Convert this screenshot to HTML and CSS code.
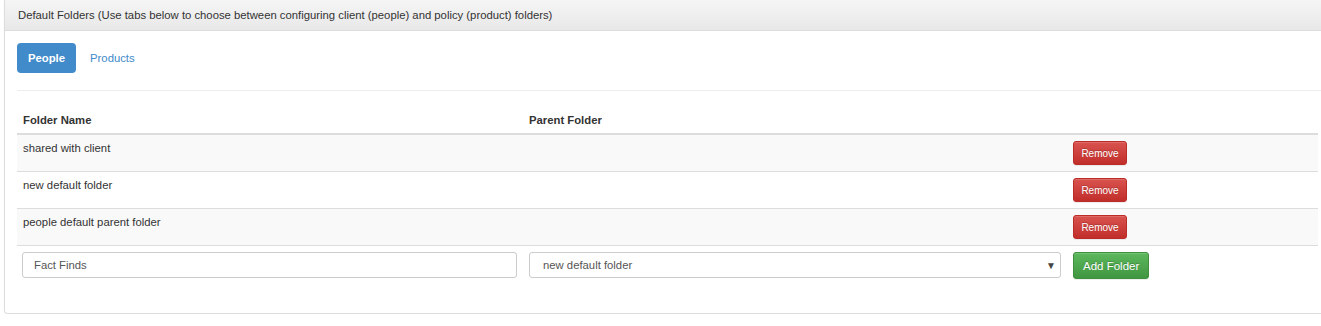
FILE: index.html
```html
<!DOCTYPE html>
<html lang="en">
<head>
  <meta charset="UTF-8" />
  <title>Default Folders</title>
  <link rel="stylesheet" href="styles.css">
</head>
<body>
  <div class="panel">
    <div class="panel-heading">Default Folders (Use tabs below to choose between configuring client (people) and policy (product) folders)</div>
    <div class="panel-body">
      <ul class="tabs">
        <li class="tab active">People</li>
        <li class="tab">Products</li>
      </ul>
      <hr />
      <table>
        <colgroup>
          <col class="c1" />
          <col class="c2" />
          <col class="c3" />
        </colgroup>
        <thead>
          <tr>
            <th>Folder Name</th>
            <th>Parent Folder</th>
            <th></th>
          </tr>
        </thead>
        <tbody>
          <tr class="striped">
            <td>shared with client</td>
            <td></td>
            <td class="actions"><button class="btn btn-danger">Remove</button></td>
          </tr>
          <tr>
            <td>new default folder</td>
            <td></td>
            <td class="actions"><button class="btn btn-danger">Remove</button></td>
          </tr>
          <tr class="striped">
            <td>people default parent folder</td>
            <td></td>
            <td class="actions"><button class="btn btn-danger">Remove</button></td>
          </tr>
          <tr class="add-row">
            <td><input type="text" class="field name-field" value="Fact Finds" /></td>
            <td>
              <div class="select-wrap">
                <select class="field">
                  <option>new default folder</option>
                </select>
                <span class="caret">&#9660;</span>
              </div>
            </td>
            <td class="actions"><button class="btn btn-success">Add Folder</button></td>
          </tr>
        </tbody>
      </table>
    </div>
  </div>
</body>
</html>
```

FILE: styles.css
```css
body {
  margin: 0;
  background: #fff;
  font-family: 'Liberation Sans', Arial, sans-serif;
  font-size: 11.3px;
  color: #333;
}
.panel {
  margin-left: 4px;
  width: 1340px;
  border: 1px solid #ddd;
  border-top: none;
  border-radius: 0 0 4px 4px;
  box-shadow: 0 1px 2px rgba(0, 0, 0, 0.05);
}
.panel-heading {
  height: 30px;
  line-height: 30px;
  padding: 0 13px;
  background: linear-gradient(to bottom, #f5f5f5, #e8e8e8);
  border-bottom: 1px solid #ddd;
  color: #333;
}
.panel-body {
  padding: 12px 22px 28px 12px;
}
.tabs {
  list-style: none;
  margin: 0;
  padding: 0;
  display: flex;
  gap: 3px;
}
.tab {
  height: 30px;
  line-height: 30px;
  padding: 0 11px;
  border-radius: 4px;
  color: #428bca;
}
.tab.active {
  background: #428bca;
  color: #fff;
  font-weight: bold;
}
hr {
  border: none;
  border-top: 1px solid #eee;
  margin: 17px 0 15px;
}
table {
  width: 1301px;
  border-collapse: collapse;
  table-layout: fixed;
}
.c1 { width: 506px; }
.c2 { width: 544px; }
.c3 { width: 251px; }
th {
  text-align: left;
  font-weight: bold;
  padding: 6px 6px 5px;
  line-height: 16px;
  border-bottom: 2px solid #ddd;
  color: #333;
}
td {
  padding: 5px 6px 6px;
  line-height: 16px;
  vertical-align: top;
  border-top: 1px solid #ddd;
}
td.actions {
  padding-top: 6px;
}
tbody tr:first-child td {
  border-top: none;
}
.striped td {
  background: #f9f9f9;
}
.btn {
  font-family: 'Liberation Sans', Arial, sans-serif;
  border-radius: 3px;
  color: #fff;
  cursor: pointer;
  text-shadow: 0 -1px 0 rgba(0, 0, 0, 0.2);
  box-shadow: inset 0 1px 0 rgba(255, 255, 255, 0.15), 0 1px 1px rgba(0, 0, 0, 0.075);
}
.btn-danger {
  height: 24px;
  width: 54px;
  padding: 0;
  font-size: 10px;
  background: linear-gradient(to bottom, #d9534f, #c12e2a);
  border: 1px solid #b92c28;
}
.btn-success {
  height: 27px;
  padding: 0 9px;
  font-size: 11.5px;
  background: linear-gradient(to bottom, #5cb85c, #419641);
  border: 1px solid #3e8f3e;
}
.add-row td {
  padding-top: 6px;
}
.field {
  box-sizing: border-box;
  height: 26px;
  border: 1px solid #ccc;
  border-radius: 3px;
  background: #fff;
  font-family: 'Liberation Sans', Arial, sans-serif;
  font-size: 11.3px;
  color: #555;
  padding: 0 11px;
}
.name-field {
  margin-left: -1px;
  width: 495px;
}
.select-wrap {
  position: relative;
  width: 532px;
}
.select-wrap select {
  width: 100%;
  appearance: none;
  -webkit-appearance: none;
  padding-left: 13px;
}
.caret {
  position: absolute;
  right: 5px;
  top: 6px;
  font-size: 10px;
  color: #444;
  pointer-events: none;
}
```
